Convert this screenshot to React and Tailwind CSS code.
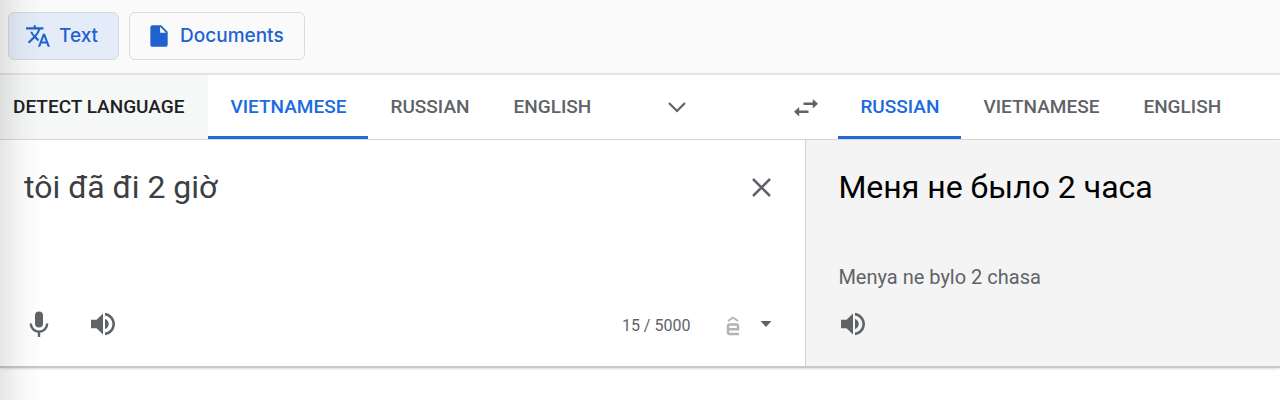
import { MdTranslate, MdInsertDriveFile } from "react-icons/md";

const sourceTabs = [
  { label: "DETECT LANGUAGE", detect: true },
  { label: "VIETNAMESE", active: true },
  { label: "RUSSIAN" },
  { label: "ENGLISH" },
];

const targetTabs = [
  { label: "RUSSIAN", active: true },
  { label: "VIETNAMESE" },
  { label: "ENGLISH" },
];

function SpeakerIcon() {
  return (
    <svg viewBox="0 0 26 26" className="h-[26px] w-[26px]" fill="currentColor" aria-hidden="true">
      <path d="M1 8.800h5.500L13 2.400v21.200l-6.500-6.400H1z" />
      <path d="M15 7.800c2.200 1 3.700 2.900 3.700 5.200s-1.500 4.200-3.700 5.200z" />
      <path d="M15 1.700c5.700.8 10 5.500 10 11.300s-4.300 10.500-10 11.300v-2.700c4.200-.8 7.400-4.300 7.400-8.600S19.200 5.200 15 4.400z" />
    </svg>
  );
}

function MicIcon() {
  return (
    <svg viewBox="0 0 26 28" className="h-7 w-[26px]" fill="none" stroke="currentColor" aria-hidden="true">
      <rect x="9" y="1.500" width="8" height="16" rx="4" fill="currentColor" stroke="none" />
      <path d="M4.800 13.500a8.200 8.200 0 0 0 16.400 0M13 21.500V27" strokeWidth="2.400" />
    </svg>
  );
}

function Tab({ label, active, detect }) {
  const color = active
    ? "text-[#1a6ae0] border-[#1f6bd9]"
    : detect
      ? "text-[#202124] bg-[#f6f8f7] border-transparent"
      : "text-[#5f6368] border-transparent";
  return (
    <button
      type="button"
      role="tab"
      aria-selected={!!active}
      className={`h-16 shrink-0 border-b-3 pt-[3px] text-[19px] font-medium ${detect ? "pr-6 pl-[13px]" : "px-[22px]"} ${color}`}
    >
      {label}
    </button>
  );
}

export default function App() {
  return (
    <div className="relative min-h-screen overflow-hidden bg-white font-['Roboto',sans-serif] text-[#5f6368]">
      {/* Mode switch */}
      <header className="flex gap-[10px] border-b-2 border-[#e3e3e3] bg-[#fafafa] px-2 pt-3 pb-[13px] font-['Inter',sans-serif] text-[19px] font-medium text-[#1f62cf]">
        <button type="button" className="flex h-12 items-center gap-2 rounded-md border border-[#d6dae2] bg-[#e5ecf9] pr-5 pl-4">
          <MdTranslate className="h-[26px] w-[26px]" />
          Text
        </button>
        <button type="button" className="flex h-12 items-center gap-2 rounded-md border border-[#dadce0] pr-5 pl-4">
          <MdInsertDriveFile className="h-[26px] w-[26px]" />
          Documents
        </button>
      </header>

      {/* Language bar */}
      <nav className="flex border-b border-[#dadada]">
        <div role="tablist" className="flex w-[63%] items-center">
          {sourceTabs.map((tab) => (
            <Tab key={tab.label} {...tab} />
          ))}
          <button type="button" aria-label="More languages" className="mr-[117px] ml-auto">
            <svg viewBox="0 0 24 24" className="h-6 w-6" fill="none" stroke="currentColor" strokeWidth="2.200" aria-hidden="true">
              <path d="M4 8l8 8 8-8" />
            </svg>
          </button>
        </div>
        <button type="button" aria-label="Swap languages" className="-mx-8 flex w-16 items-center justify-center">
          <svg viewBox="0 0 24 24" className="h-6 w-6" fill="currentColor" aria-hidden="true">
            <path d="M9.500 7.500h9.300V4L24 8.700l-5.200 4.700V10H9.500zM14.500 15.500H5.200V12L0 16.700l5.200 4.700V18h9.300z" />
          </svg>
        </button>
        <div role="tablist" className="flex w-[37%] pl-8">
          {targetTabs.map((tab) => (
            <Tab key={tab.label} {...tab} />
          ))}
        </div>
      </nav>

      {/* Source and result */}
      <main className="flex border-b-2 border-[#c8c8c8] shadow-sm">
        <section className="flex w-[63%] flex-col justify-between border-r border-[#d2d2d2] pt-[27px] pr-8 pb-7 pl-6">
          <div className="flex items-start">
            <textarea
              aria-label="Source text"
              rows={1}
              spellCheck={false}
              defaultValue="tôi đã đi 2 giờ"
              className="h-10 flex-1 resize-none bg-transparent text-[32px] leading-10 text-[#3c4043] outline-none"
            />
            <button type="button" aria-label="Clear source text" className="mt-2">
              <svg viewBox="0 0 24 24" className="h-6 w-6" fill="none" stroke="currentColor" strokeWidth="2.500" aria-hidden="true">
                <path d="M4 4l17 17M21 4L4 21" />
              </svg>
            </button>
          </div>
          <div className="flex items-center pl-[2px]">
            <button type="button" aria-label="Translate by voice" className="mr-[38px]">
              <MicIcon />
            </button>
            <button type="button" aria-label="Listen to source text">
              <SpeakerIcon />
            </button>
            <span className="mr-9 ml-auto pt-1 text-base">15 / 5000</span>
            <button type="button" aria-label="Input tools" className="mr-5 pt-1 text-[#b4b4b4]">
              <svg viewBox="0 0 14 20" className="h-5 w-[14px]" fill="none" stroke="currentColor" strokeWidth="2.500" aria-hidden="true">
                <path d="M2 5l5-3.500L12 5" strokeWidth="1.800" />
                <path d="M2 13.200h10V10Q12 8.500 10.500 8.500h-7Q2 8.500 2 10v6.500Q2 18 3.500 18H13" />
              </svg>
            </button>
            <button type="button" aria-label="Choose input tool" className="mr-px">
              <svg viewBox="0 0 12 6" className="h-[6px] w-3" fill="currentColor" aria-hidden="true">
                <path d="M.5 0h11L6 6z" />
              </svg>
            </button>
          </div>
        </section>
        <section className="flex w-[37%] flex-col items-start bg-[#f4f4f4] pt-[27px] pb-[29px] pl-8">
          <p className="text-[32px] leading-10 text-black">Меня не было 2 часа</p>
          <p className="mt-14 text-xl leading-7">Menya ne bylo 2 chasa</p>
          <button type="button" aria-label="Listen to translation" className="mt-5 ml-[2px]">
            <SpeakerIcon />
          </button>
        </section>
      </main>

      {/* Shade along the left edge */}
      <div className="pointer-events-none absolute inset-y-0 left-0 w-11 bg-linear-to-r from-black/10 via-black/3 to-transparent" />
    </div>
  );
}
